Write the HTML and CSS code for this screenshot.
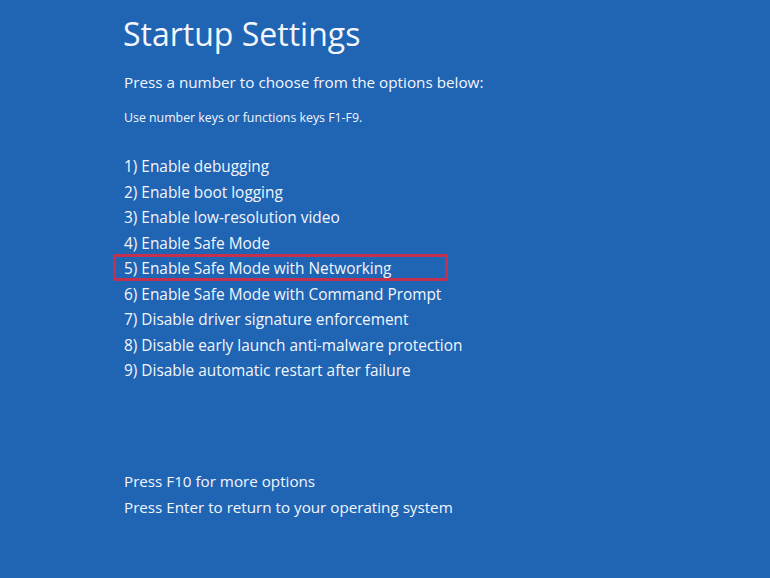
FILE: index.html
```html
<!DOCTYPE html>
<html>
<head>
<meta charset="utf-8">
<link rel="stylesheet" href="styles.css">
</head>
<body>
<main class="screen">
  <h1 class="title">Startup Settings</h1>
  <p class="lead">Press a number to choose from the options below:</p>
  <p class="hint">Use number keys or functions keys F1-F9.</p>
  <ol class="options">
    <li>1) Enable debugging</li>
    <li>2) Enable boot logging</li>
    <li>3) Enable low-resolution video</li>
    <li>4) Enable Safe Mode</li>
    <li class="selected">5) Enable Safe Mode with Networking</li>
    <li>6) Enable Safe Mode with Command Prompt</li>
    <li>7) Disable driver signature enforcement</li>
    <li>8) Disable early launch anti-malware protection</li>
    <li>9) Disable automatic restart after failure</li>
  </ol>
  <div class="footer">
    <p>Press F10 for more options</p>
    <p>Press Enter to return to your operating system</p>
  </div>
</main>
</body>
</html>
```

FILE: styles.css
```css
html, body {
  margin: 0;
  padding: 0;
  background: #2064b4;
}
body {
  width: 770px;
  height: 578px;
  overflow: hidden;
  font-family: "Open Sans", "Noto Sans", sans-serif;
  color: #f3f6fb;
}
.screen {
  display: flex;
  flex-direction: column;
  padding: 12px 0 0 123px;
}
.title {
  margin: 0;
  font-weight: 400;
  font-size: 32px;
  line-height: 44px;
}
.lead {
  margin: 15px 0 0 1px;
  font-size: 15.25px;
  line-height: 22px;
}
.hint {
  margin: 16px 0 0 1px;
  font-size: 12.35px;
  line-height: 18px;
}
.options {
  list-style: none;
  margin: 27px 0 0 0;
  padding: 0;
}
.options li {
  position: relative;
  font-size: 15.4px;
  line-height: 25.5px;
  padding-left: 1px;
}
.options li.selected::after {
  content: "";
  position: absolute;
  left: -10px;
  top: -2px;
  bottom: 1px;
  width: 335px;
  box-sizing: border-box;
  border: 3px solid #c4304d;
  border-radius: 2px;
}
.footer {
  margin-top: 84px;
}
.footer p {
  margin: 0 0 0 1px;
  font-size: 15.2px;
  line-height: 26px;
}
```
